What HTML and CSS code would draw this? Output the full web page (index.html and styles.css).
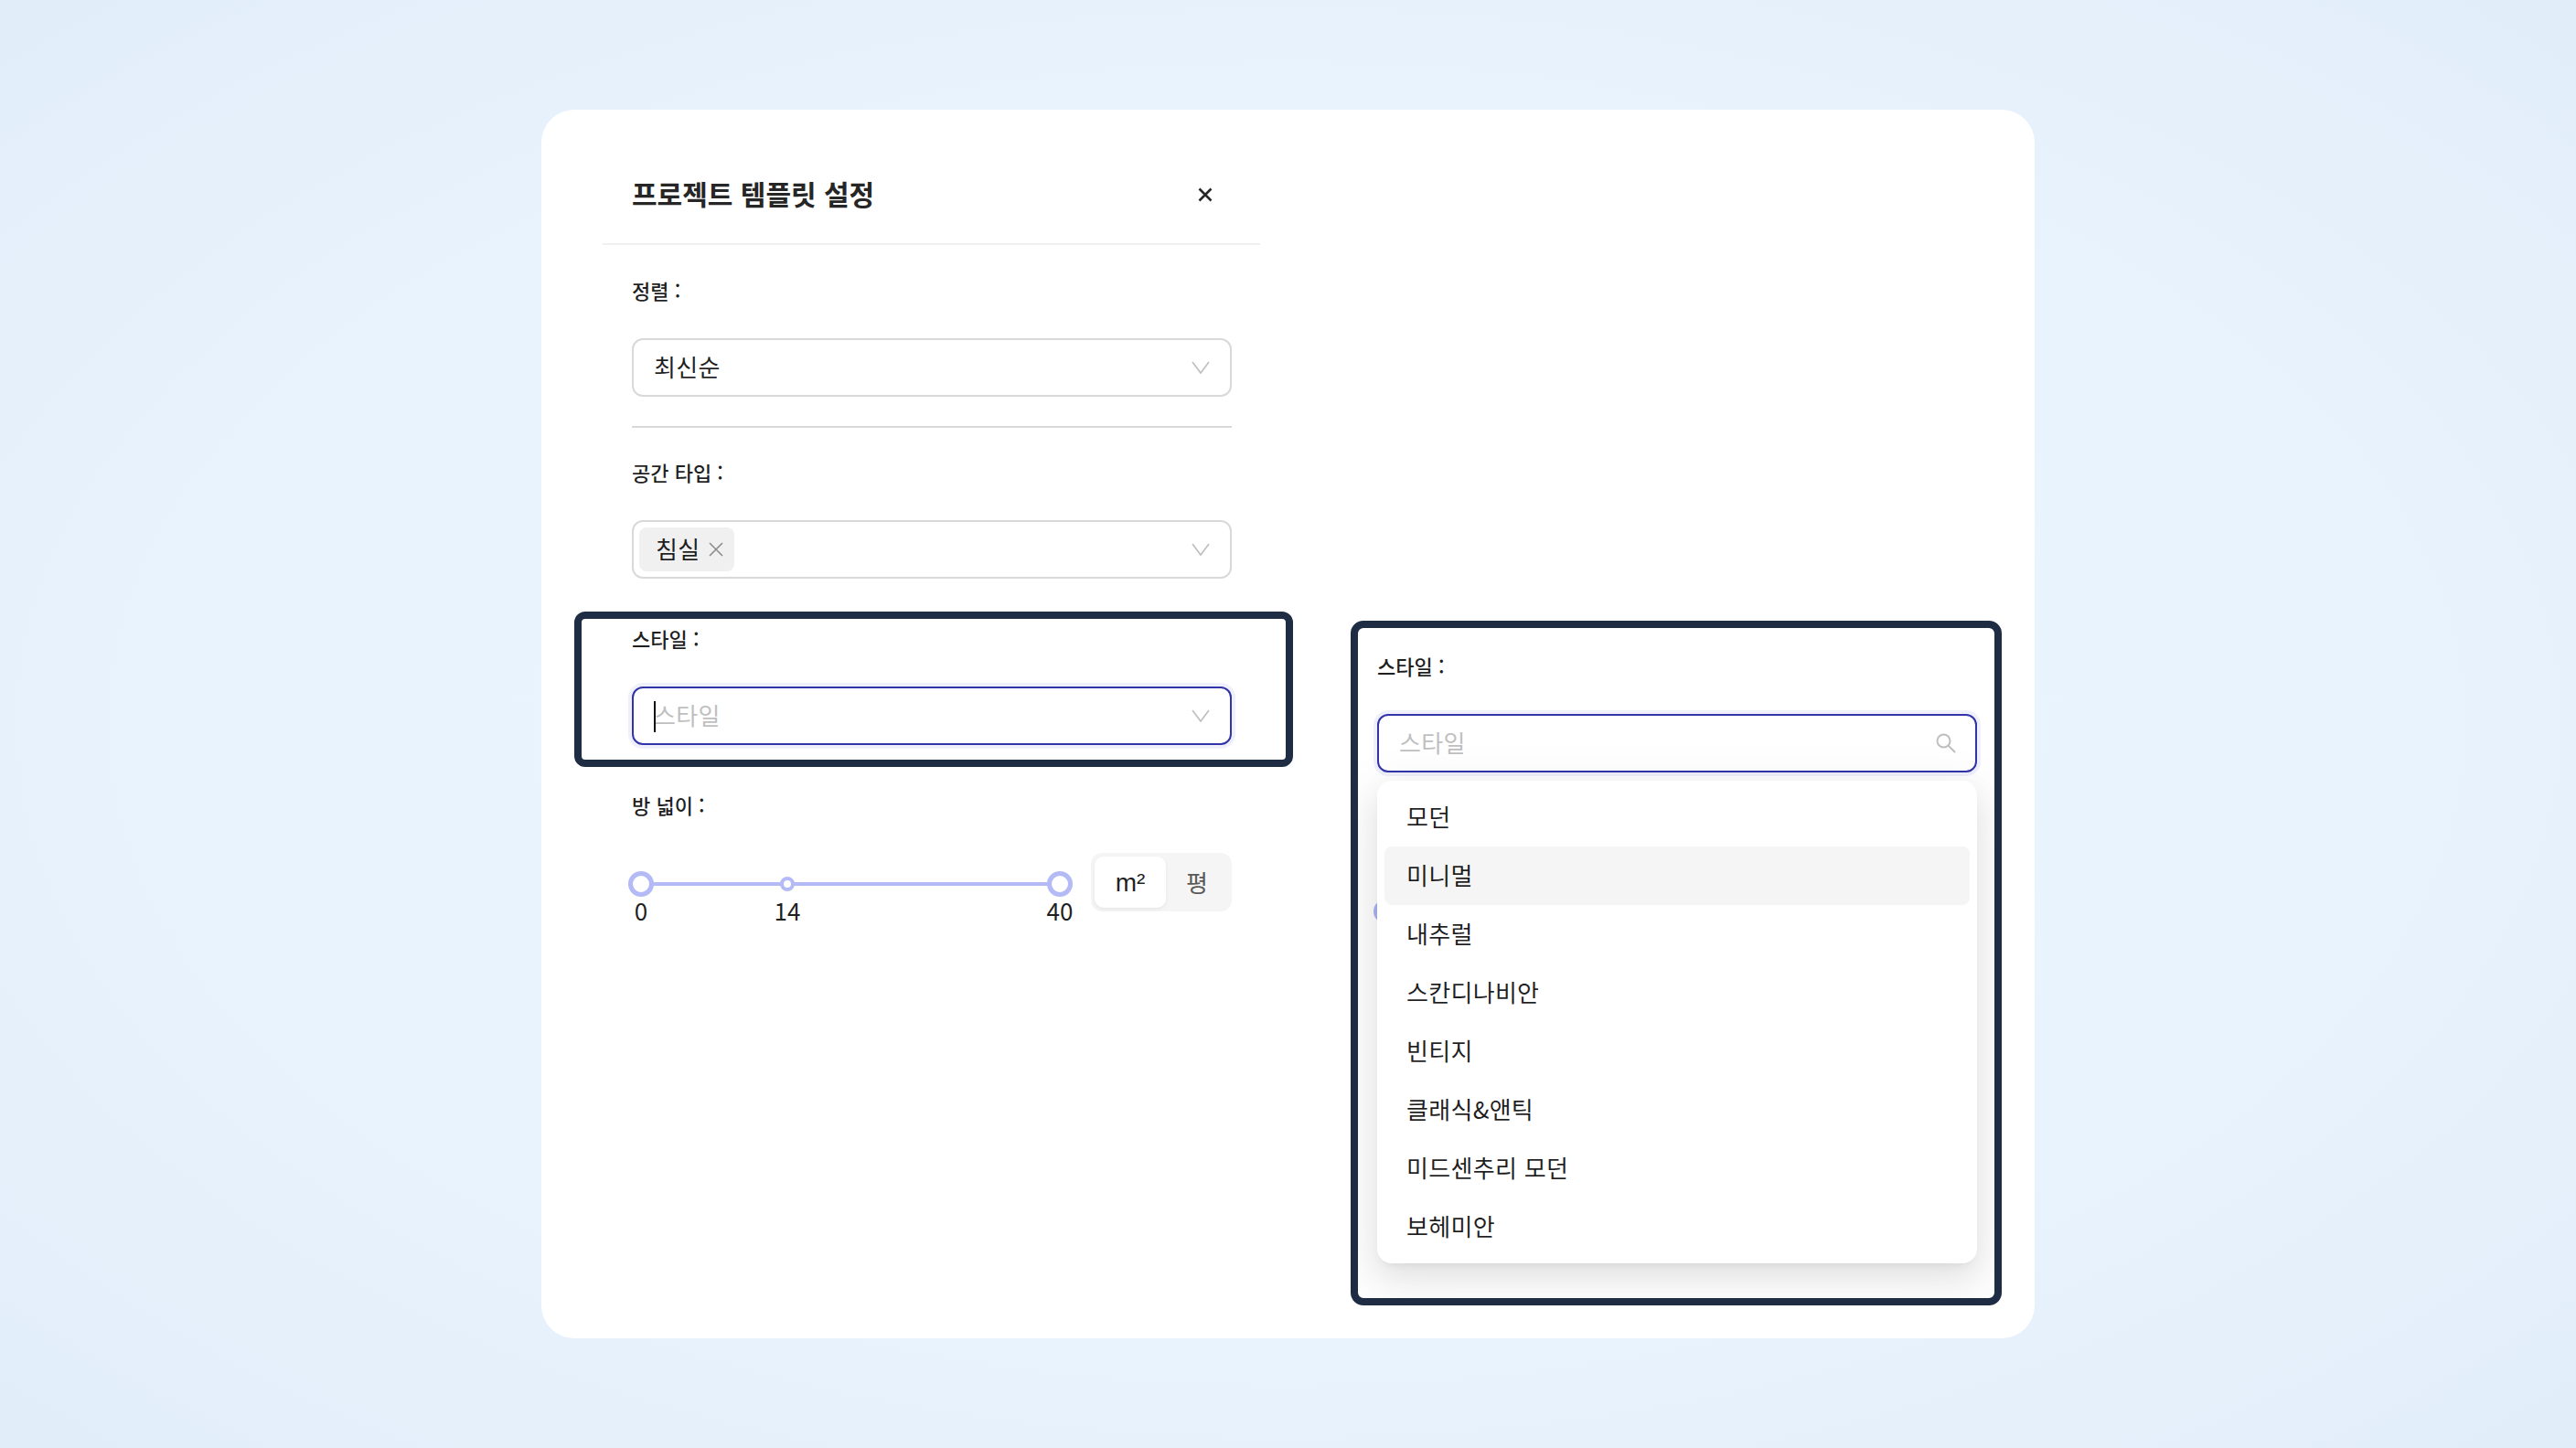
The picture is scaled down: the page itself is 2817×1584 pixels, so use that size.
FILE: index.html
```html
<!DOCTYPE html>
<html lang="ko">
<head>
<meta charset="utf-8">
<title>프로젝트 템플릿 설정</title>
<link rel="stylesheet" href="styles.css">
</head>
<body>
<main class="card">
  <section class="panel">
    <header class="panel-head">
      <h1 class="title">프로젝트 템플릿 설정</h1>
      <svg class="close" viewBox="0 0 16 16" width="16" height="16"><path d="M1.5 1.5l13 13M14.5 1.5l-13 13"/></svg>
    </header>
    <div class="panel-body">
      <div class="field field-first">
        <div class="label">정렬 :</div>
        <div class="select"><span class="value">최신순</span>
          <svg class="chev" viewBox="0 0 20 14" width="20" height="14"><path d="M1 1l9 12 9-12"/></svg>
        </div>
      </div>
      <hr class="rule">
      <div class="field">
        <div class="label">공간 타입 :</div>
        <div class="select select-tags">
          <span class="tag"><span class="value">침실</span><svg class="tag-x" viewBox="0 0 16 16" width="16" height="16"><path d="M1 1l14 14M15 1L1 15"/></svg></span>
          <svg class="chev" viewBox="0 0 20 14" width="20" height="14"><path d="M1 1l9 12 9-12"/></svg>
        </div>
      </div>
      <div class="field field-marked">
        <div class="mark"></div>
        <div class="label">스타일 :</div>
        <div class="select select-focus"><span class="caret"></span><span class="value placeholder">스타일</span>
          <svg class="chev" viewBox="0 0 20 14" width="20" height="14"><path d="M1 1l9 12 9-12"/></svg>
        </div>
      </div>
      <div class="field">
        <div class="label">방 넓이 :</div>
        <div class="range-row">
          <div class="slider">
            <div class="track"></div>
            <span class="handle handle-start"></span>
            <span class="dot"></span>
            <span class="handle handle-end"></span>
            <span class="tick tick-start">0</span>
            <span class="tick tick-mid">14</span>
            <span class="tick tick-end">40</span>
          </div>
          <div class="segment">
            <span class="seg seg-on">m²</span>
            <span class="seg">평</span>
          </div>
        </div>
      </div>
    </div>
  </section>
  <section class="frame">
    <span class="peek"></span>
    <div class="label">스타일 :</div>
    <div class="select select-focus"><span class="value placeholder">스타일</span>
      <svg class="search" viewBox="0 0 22 22" width="22" height="22"><circle cx="8.5" cy="8.5" r="7"/><path d="M13.5 13.5L20.5 20.5"/></svg>
    </div>
    <ul class="menu">
      <li class="opt">모던</li>
      <li class="opt opt-active">미니멀</li>
      <li class="opt">내추럴</li>
      <li class="opt">스칸디나비안</li>
      <li class="opt">빈티지</li>
      <li class="opt">클래식&amp;앤틱</li>
      <li class="opt">미드센추리 모던</li>
      <li class="opt">보헤미안</li>
    </ul>
  </section>
</main>
</body>
</html>
```
FILE: styles.css
```css
* { box-sizing: border-box; }
html, body { margin: 0; height: 100%; }
body {
  width: 2817px;
  height: 1584px;
  display: flex;
  align-items: center;
  justify-content: center;
  overflow: hidden;
  background: radial-gradient(ellipse 75% 75% at 50% 50%, #ebf5fe 0%, #e9f3fd 55%, #e0ecf8 100%);
  font-family: "Noto Sans CJK KR", "Noto Sans", sans-serif;
  color: rgba(0, 0, 0, 0.88);
  font-size: 26px;
}
.card {
  width: 1633px;
  height: 1344px;
  background: #fff;
  border-radius: 36px;
  padding: 60px 0 0 67px;
  display: flex;
  align-items: flex-start;
  gap: 99px;
}
.panel { width: 719px; flex: none; }
.panel-head {
  height: 88px;
  padding: 0 32px 24px;
  border-bottom: 2px solid #f0f0f0;
  display: flex;
  align-items: center;
  justify-content: space-between;
}
.title { margin: 0; font-size: 30px; line-height: 64px; font-weight: 700; color: #262626; }
.close { margin: 3px 20px 0 0; fill: none; stroke: #262626; stroke-width: 2.6; }
.panel-body { padding: 0 31px 0 32px; }
.field { position: relative; margin-bottom: 50px; }
.field-first { margin-top: 34px; margin-bottom: 0; }
.rule { margin: 32px 0 33px; border: 0; height: 2px; background: #d9d9d9; }
.label {
  font-size: 22px;
  line-height: 30px;
  font-weight: 500;
  margin-bottom: 38px;
}
.select {
  position: relative;
  height: 64px;
  padding: 0 22px;
  border: 2px solid #d9d9d9;
  border-radius: 12px;
  background: #fff;
  display: flex;
  align-items: center;
  justify-content: space-between;
  line-height: 36px;
  letter-spacing: 0.3px;
}
.select-tags { padding-left: 6px; }
.select-focus {
  border-color: #3235a8;
  box-shadow: 0 0 0 4px rgba(60, 70, 230, 0.08);
}
.value { display: block; padding-bottom: 2px; }
.placeholder { color: #bfbfbf; }
.chev { margin-right: 0; fill: none; stroke: #bfbfbf; stroke-width: 1.7; }
.search { margin-right: -1px; fill: none; stroke: #bfbfbf; stroke-width: 2; stroke-linecap: round; }
.caret {
  position: absolute;
  left: 22px;
  top: 14px;
  width: 2px;
  height: 34px;
  background: #111;
}
.tag {
  height: 48px;
  width: 104px;
  padding-left: 18px;
  border-radius: 8px;
  background: #f0f0f0;
  display: flex;
  align-items: center;
  gap: 10px;
}
.tag-x { fill: none; stroke: #8c8c8c; stroke-width: 1.6; }
.mark {
  position: absolute;
  left: -63px;
  top: -14px;
  width: 786px;
  height: 170px;
  border: 8px solid #1e2c44;
  border-radius: 12px;
  pointer-events: none;
}
.field-marked .label { position: relative; }
.range-row { display: flex; align-items: flex-start; justify-content: space-between; }
.slider { position: relative; width: 502px; height: 64px; }
.track {
  position: absolute;
  left: 10px;
  right: 34px;
  top: 32px;
  height: 4px;
  background: #b3baf6;
}
.handle {
  position: absolute;
  top: 20px;
  width: 28px;
  height: 28px;
  border: 5px solid #b3baf6;
  border-radius: 50%;
  background: #fff;
}
.handle-start { left: -4px; }
.handle-end { right: 20px; }
.dot {
  position: absolute;
  left: 162px;
  top: 26px;
  width: 16px;
  height: 16px;
  border: 4px solid #b3baf6;
  border-radius: 50%;
  background: #fff;
}
.tick {
  position: absolute;
  top: 46px;
  font-size: 26px;
  line-height: 34px;
  transform: translateX(-50%);
}
.tick-start { left: 10px; }
.tick-mid { left: 170px; }
.tick-end { left: 468px; }
.segment {
  width: 154px;
  height: 64px;
  padding: 4px;
  border-radius: 12px;
  background: #f5f5f5;
  display: flex;
}
.seg {
  flex: 1;
  display: flex;
  align-items: center;
  justify-content: center;
  color: #595959;
  font-size: 26px;
  padding-bottom: 2px;
}
.seg-on {
  flex: none;
  width: 78px;
  background: #fff;
  color: rgba(0, 0, 0, 0.88);
  border-radius: 10px;
  box-shadow: 0 2px 4px rgba(0, 0, 0, 0.06);
  font-family: "Liberation Sans", sans-serif;
  font-size: 28px;
  padding: 2px 0 0;
}
.frame {
  position: relative;
  flex: none;
  width: 712px;
  height: 749px;
  margin-top: 499px;
  padding: 26px 19px 0 21px;
  border: 8px solid #1e2c44;
  border-radius: 14px;
  overflow: hidden;
  background: #fff;
}
.peek {
  position: absolute;
  left: 17px;
  top: 297px;
  width: 26px;
  height: 26px;
  border-radius: 50%;
  background: #adb5f3;
}
.menu {
  position: absolute;
  left: 21px;
  top: 167px;
  width: 656px;
  height: 528px;
  margin: 0;
  padding: 8px;
  list-style: none;
  background: #fff;
  border-radius: 16px;
  box-shadow: 0 12px 32px rgba(0, 0, 0, 0.08), 0 6px 12px -8px rgba(0, 0, 0, 0.12), 0 18px 56px 16px rgba(0, 0, 0, 0.05);
}
.opt {
  height: 64px;
  padding: 0 24px;
  border-radius: 8px;
  line-height: 62px;
  letter-spacing: 0.3px;
}
.opt-active { background: #f5f5f5; }
```
